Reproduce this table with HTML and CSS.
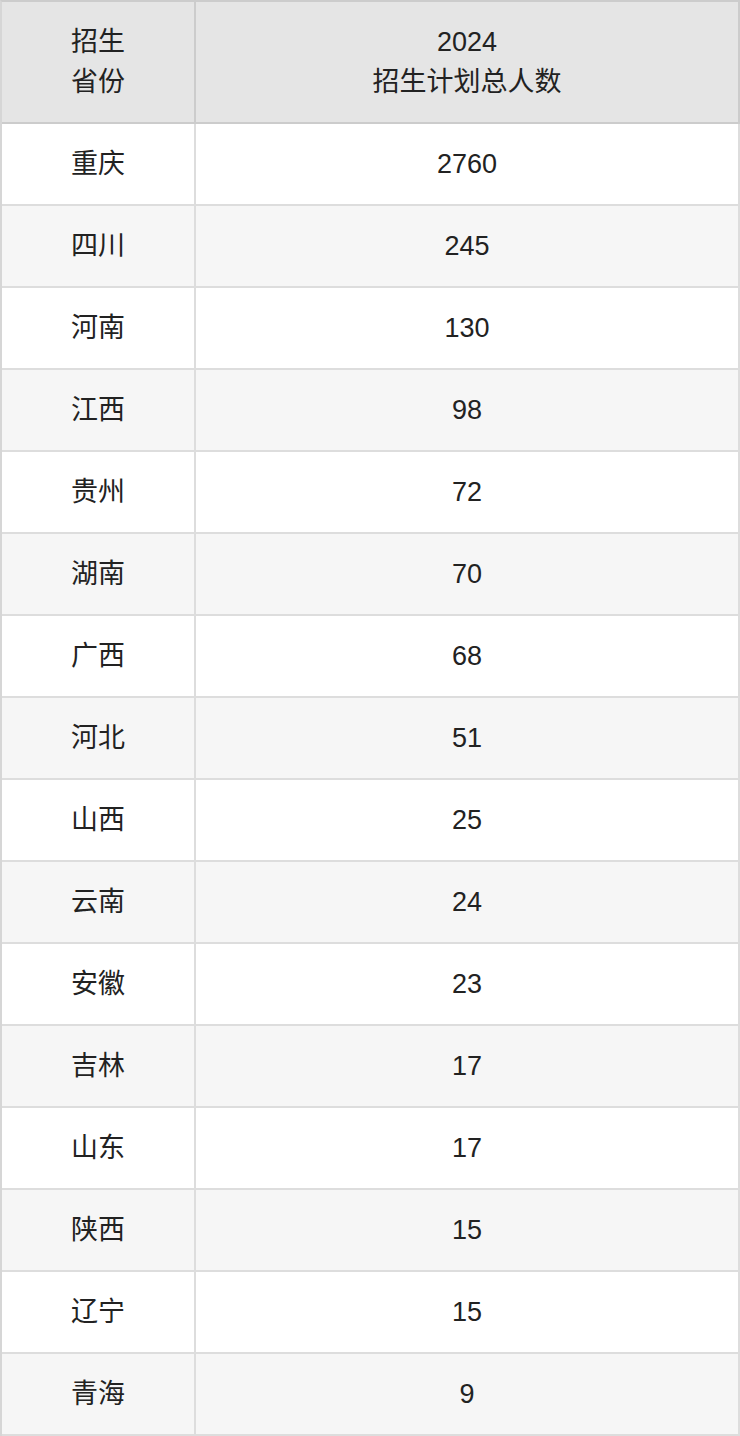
FILE: index.html
```html
<!DOCTYPE html>
<html lang="zh-CN">
<head>
<meta charset="utf-8">
<title>招生计划</title>
<link rel="stylesheet" href="styles.css">
</head>
<body>
<table class="plan">
  <thead>
    <tr class="head-row">
      <th class="col-prov">招生<br>省份</th>
      <th class="col-num">2024<br>招生计划总人数</th>
    </tr>
  </thead>
  <tbody>
    <tr><td>重庆</td><td>2760</td></tr>
    <tr><td>四川</td><td>245</td></tr>
    <tr><td>河南</td><td>130</td></tr>
    <tr><td>江西</td><td>98</td></tr>
    <tr><td>贵州</td><td>72</td></tr>
    <tr><td>湖南</td><td>70</td></tr>
    <tr><td>广西</td><td>68</td></tr>
    <tr><td>河北</td><td>51</td></tr>
    <tr><td>山西</td><td>25</td></tr>
    <tr><td>云南</td><td>24</td></tr>
    <tr><td>安徽</td><td>23</td></tr>
    <tr><td>吉林</td><td>17</td></tr>
    <tr><td>山东</td><td>17</td></tr>
    <tr><td>陕西</td><td>15</td></tr>
    <tr><td>辽宁</td><td>15</td></tr>
    <tr><td>青海</td><td>9</td></tr>
  </tbody>
</table>
</body>
</html>
```
FILE: styles.css
```css
html, body {
  margin: 0;
  padding: 0;
  background: #ffffff;
}

.plan {
  width: 740px;
  border-collapse: separate;
  border-spacing: 0;
  table-layout: fixed;
  font-family: "Liberation Sans", "Noto Sans CJK SC", sans-serif;
  font-size: 27px;
  color: #222222;
  border-top: 2px solid #cccccc;
  border-left: 2px solid #d6d6d6;
}

.plan th,
.plan td {
  padding: 0;
  text-align: center;
  vertical-align: middle;
  font-weight: normal;
  box-sizing: border-box;
}

.col-prov {
  width: 194px;
}

.plan th {
  background: #e5e5e5;
  height: 122px;
  line-height: 40px;
  border-right: 2px solid #cccccc;
  border-bottom: 2px solid #cccccc;
}

.plan td {
  height: 82px;
  line-height: 40px;
  border-right: 2px solid #dddddd;
  border-bottom: 2px solid #dddddd;
}

.plan tbody tr:nth-child(even) td {
  background: #f6f6f6;
}
```
